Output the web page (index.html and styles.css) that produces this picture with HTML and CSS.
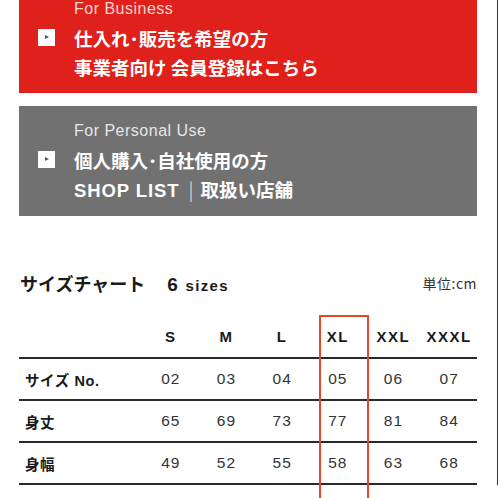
FILE: index.html
```html
<!DOCTYPE html>
<html lang="ja">
<head>
<meta charset="utf-8">
<link rel="stylesheet" href="styles.css">
</head>
<body>
<div class="page">
  <a class="cta cta-red">
    <span class="cta-label">For Business</span>
    <span class="cta-icon"></span>
    <span class="cta-line1">仕入れ･販売を希望の方</span>
    <span class="cta-line2">事業者向け 会員登録はこちら</span>
  </a>
  <a class="cta cta-gray">
    <span class="cta-label">For Personal Use</span>
    <span class="cta-icon"></span>
    <span class="cta-line1">個人購入･自社使用の方</span>
    <span class="cta-line2"><span class="latin">SHOP LIST</span><span class="sep">|</span>取扱い店舗</span>
  </a>

  <div class="chart-head">
    <h2 class="chart-title">サイズチャート<span class="count"><span class="num">6</span> sizes</span></h2>
    <span class="unit">単位:cm</span>
  </div>

  <div class="table-wrap">
    <table class="size-table">
      <thead>
        <tr><th></th><th>S</th><th>M</th><th>L</th><th>XL</th><th>XXL</th><th>XXXL</th></tr>
      </thead>
      <tbody>
        <tr><th>サイズ No.</th><td>02</td><td>03</td><td>04</td><td>05</td><td>06</td><td>07</td></tr>
        <tr><th>身丈</th><td>65</td><td>69</td><td>73</td><td>77</td><td>81</td><td>84</td></tr>
        <tr><th>身幅</th><td>49</td><td>52</td><td>55</td><td>58</td><td>63</td><td>68</td></tr>
      </tbody>
    </table>
    <div class="highlight"></div>
  </div>
</div>
</body>
</html>
```

FILE: styles.css
```css
html, body {
  margin: 0;
  padding: 0;
  background: #fff;
}
body {
  font-family: "Liberation Sans", "Noto Sans CJK JP", sans-serif;
  color: #222;
  overflow: hidden;
  height: 498px;
}
.page {
  width: 458px;
  padding: 0 20px 0 19px;
  border-right: 1px solid #333;
  min-height: 498px;
  box-sizing: content-box;
}
.cta {
  display: grid;
  grid-template-columns: 55px 1fr;
  grid-template-rows: 29px 29px 29px;
  align-items: center;
  color: #fff;
  text-decoration: none;
}
.cta-red {
  background: #e0201a;
  margin-top: -16px;
  padding: 10px 0 12px;
}
.cta-gray {
  background: #717171;
  margin-top: 13px;
  padding: 10px 0 13px;
}
.cta-label {
  grid-column: 2;
  grid-row: 1;
  font-size: 16px;
  letter-spacing: 0.5px;
}
.cta-red .cta-label { color: #fbd6d2; }
.cta-gray .cta-label { color: #e6e6e6; }
.cta-icon {
  grid-column: 1;
  grid-row: 2;
  width: 17px;
  height: 17px;
  margin-left: 19px;
  background: #fff;
  position: relative;
}
.cta-icon::after {
  content: "";
  position: absolute;
  left: 7px;
  top: 6px;
  border-left: 4px solid #555;
  border-top: 2.5px solid transparent;
  border-bottom: 2.5px solid transparent;
}
.cta-line1, .cta-line2 {
  grid-column: 2;
  font-size: 18.5px;
  font-weight: bold;
  font-family: "Noto Sans CJK JP", sans-serif;
  white-space: nowrap;
}
.cta-line1 { grid-row: 2; }
.cta-line2 { grid-row: 3; }
.cta-line2 .latin {
  font-family: "Liberation Sans", sans-serif;
  letter-spacing: 0.9px;
}
.cta-line2 .sep {
  font-weight: normal;
  color: #cfcfcf;
  margin: 0 7px 0 9px;
}

.chart-head {
  display: flex;
  align-items: center;
  justify-content: space-between;
  margin-top: 54px;
  height: 26px;
}
.chart-title {
  margin: 0 0 0 1px;
  font-family: "Noto Sans CJK JP", sans-serif;
  font-size: 18px;
  font-weight: bold;
  color: #1a1a1a;
  display: flex;
  align-items: baseline;
}
.count {
  margin-left: 22px;
  font-family: "Liberation Sans", sans-serif;
  font-size: 15px;
  letter-spacing: 1.3px;
}
.count .num {
  font-size: 19px;
  margin-right: 1px;
}
.unit {
  font-family: "Noto Sans CJK JP", sans-serif;
  font-size: 14px;
  color: #333;
  letter-spacing: 0.5px;
}

.table-wrap {
  position: relative;
  margin-top: 19px;
}
.size-table {
  width: 100%;
  border-collapse: collapse;
  table-layout: fixed;
}
.size-table th:first-child {
  width: 124px;
}
.size-table thead th {
  height: 42px;
  padding: 0;
  font-size: 15px;
  font-weight: bold;
  letter-spacing: 1.5px;
  text-align: center;
  vertical-align: middle;
  border-bottom: 2px solid #2a2a2a;
  color: #1a1a1a;
}
.size-table tbody th {
  text-align: left;
  padding: 0 0 0 6px;
  font-family: "Liberation Sans", "Noto Sans CJK JP", sans-serif;
  font-size: 14.5px;
  font-weight: bold;
  letter-spacing: 0.6px;
  color: #1a1a1a;
  white-space: nowrap;
}
.size-table tbody td {
  text-align: center;
  font-size: 15.5px;
  color: #333;
  letter-spacing: 1px;
  padding: 0;
}
.size-table tbody th, .size-table tbody td {
  height: 42px;
  box-sizing: border-box;
  border-bottom: 2px solid #2a2a2a;
}
.highlight {
  position: absolute;
  left: 300px;
  top: 0;
  width: 46px;
  height: 200px;
  border: 2px solid #e04a2c;
  border-bottom: none;
  border-radius: 1px;
}
```
